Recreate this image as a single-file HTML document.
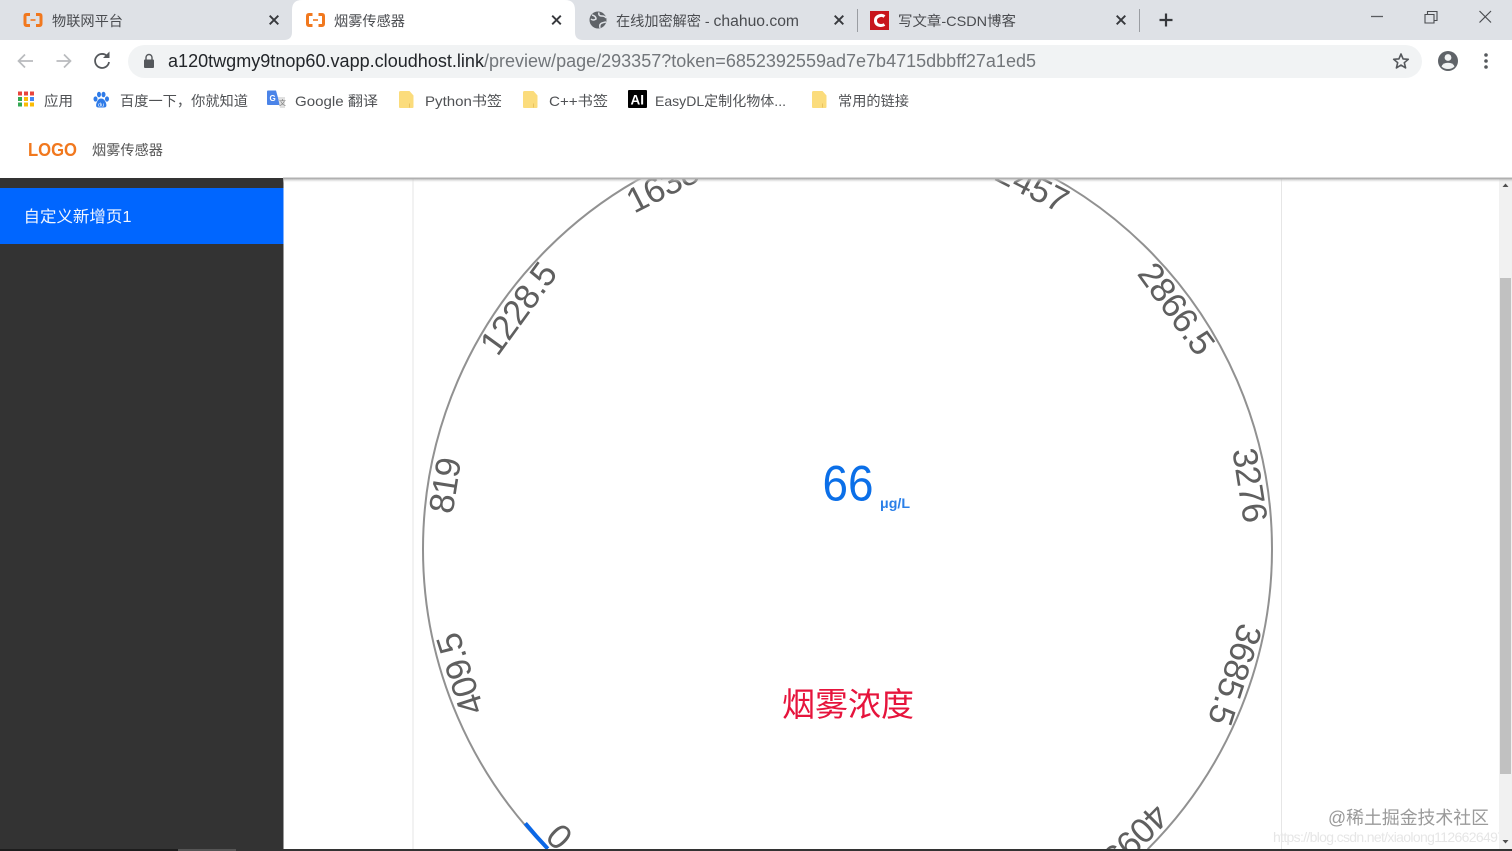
<!DOCTYPE html>
<html lang="zh">
<head>
<meta charset="utf-8">
<title>烟雾传感器</title>
<style>
html,body{margin:0;padding:0;width:1512px;height:851px;overflow:hidden;background:#fff}
svg{display:block}
text{font-family:"Liberation Sans","Noto Sans CJK SC",sans-serif}
.t{font-size:14px;fill:#4a4c50}
.b{font-size:14px;fill:#4f5154}
.g{font-size:35px;fill:#5f5f5f;text-anchor:middle}
</style>
</head>
<body>
<svg width="1512" height="851" viewBox="0 0 1512 851" xmlns="http://www.w3.org/2000/svg">
<defs>
<g id="ali" fill="none" stroke="#f1781e" stroke-width="3">
  <path d="M6.500 1.500H3Q1.500 1.500 1.500 3.200V10.800Q1.500 12.500 3 12.500H6.500"/>
  <path d="M12.500 1.500H16Q17.500 1.500 17.500 3.200V10.800Q17.500 12.500 16 12.500H12.500"/>
  <path d="M7 7H12" stroke-width="1.600"/>
</g>
<g id="x" stroke="#37393d" stroke-width="1.900" fill="none"><path d="M-4.300 -4.300L4.300 4.300M4.300 -4.300L-4.300 4.300"/></g>
<g id="folder">
  <path d="M0 1.500Q0 0 1.500 0H10.500L14.500 4.500V16Q14.500 17 13.500 17H1Q0 17 0 16Z" fill="#fbdc7c"/>
  <path d="M10.500 12.500V16.500" stroke="#e9c25e" stroke-width="1"/>
</g>
<linearGradient id="sh" x1="0" y1="0" x2="0" y2="1"><stop offset="0" stop-color="#9a9a9a"/><stop offset="1" stop-color="#fff" stop-opacity="0"/></linearGradient>
</defs>

<!-- page content -->
<rect width="1512" height="851" fill="#fff"/>
<rect x="412.500" y="178" width="1" height="673" fill="#e6e6e6"/>
<rect x="1281" y="178" width="1" height="673" fill="#e6e6e6"/>

<!-- gauge -->
<path d="M547.300 849.200A424.500 424.500 0 1 1 1147.700 849.200" fill="none" stroke="#919191" stroke-width="2"/>
<path d="M547.800 848.700A424.500 424.500 0 0 1 525.300 823.300" fill="none" stroke="#0b67e6" stroke-width="4"/>
<g class="labels">
<text class="g" transform="translate(559 837) rotate(-135) translate(0 12.500)">0</text>
<text class="g" transform="translate(459.500 674) rotate(-108) translate(0 12.500)" textLength="84">409.5</text>
<text class="g" transform="translate(444.500 485.200) rotate(-81) translate(0 12.500)" textLength="56">819</text>
<text class="g" transform="translate(518 308) rotate(-54) translate(0 12.500)" textLength="104">1228.5</text>
<text class="g" transform="translate(662.300 185.500) rotate(-27) translate(0 12.500)" textLength="76">1638</text>
<text class="g" transform="translate(1032.700 185.500) rotate(27) translate(0 12.500)" textLength="76">2457</text>
<text class="g" transform="translate(1177 308.500) rotate(54) translate(0 12.500)" textLength="104">2866.5</text>
<text class="g" transform="translate(1250.500 485.200) rotate(81) translate(0 12.500)" textLength="75">3276</text>
<text class="g" transform="translate(1235.500 675) rotate(108) translate(0 12.500)" textLength="104">3685.5</text>
<text class="g" transform="translate(1136 837.500) rotate(135) translate(0 12.500)" textLength="76">4095</text>
</g>
<text x="822.500" y="500.500" font-size="50" fill="#0b6fe8" textLength="51" lengthAdjust="spacingAndGlyphs">66</text>
<text x="880" y="508" font-size="14" font-weight="bold" fill="#2a7fe8" textLength="30" lengthAdjust="spacingAndGlyphs">μg/L</text>
<text x="782" y="716" font-size="33" fill="#e6143c">烟雾浓度</text>

<!-- watermark -->
<text x="1328" y="824" font-size="18" fill="#9a9a9a" textLength="161" lengthAdjust="spacingAndGlyphs">@稀土掘金技术社区</text>
<text x="1273" y="842" font-size="14" fill="#e6e6e6" textLength="232">https://blog.csdn.net/xiaolong1126626497</text>

<!-- scrollbar -->
<rect x="1499" y="178" width="13" height="673" fill="#f1f1f1"/>
<rect x="1500" y="278" width="11" height="496" fill="#c1c1c1"/>
<path d="M1502.500 187L1505.500 183.500L1508.500 187Z" fill="#505050"/>
<path d="M1502.500 840L1505.500 843.500L1508.500 840Z" fill="#505050"/>

<!-- sidebar -->
<rect x="0" y="178" width="283.500" height="673" fill="#333333"/>
<rect x="0" y="188" width="283.500" height="56" fill="#0066ff"/>
<text x="23.500" y="222" font-size="16" fill="#f2f6ff" textLength="108" lengthAdjust="spacingAndGlyphs">自定义新增页1</text>
<rect x="178" y="849" width="58" height="2" fill="#555"/>

<!-- bottom taskbar edge -->
<rect x="0" y="849" width="178" height="2" fill="#1d1d1d"/>
<rect x="236" y="849" width="1276" height="2" fill="#333"/>

<!-- header -->
<rect x="283" y="178" width="1229" height="5" fill="url(#sh)"/>
<rect x="0" y="80" width="1512" height="98" fill="#fff"/>
<rect x="283" y="177.500" width="1229" height="1.500" fill="#b0b0b0"/>
<text x="28" y="156" font-size="18.500" font-weight="bold" fill="#f1781e" textLength="49" lengthAdjust="spacingAndGlyphs">LOGO</text>
<text x="92" y="155" font-size="14" fill="#555" textLength="71" lengthAdjust="spacingAndGlyphs">烟雾传感器</text>

<!-- tab strip -->
<rect width="1512" height="40" fill="#dee1e6"/>
<path d="M284 40Q292 40 292 32V10Q292 0 302 0H565Q575 0 575 10V32Q575 40 583 40Z" fill="#fff"/>
<use href="#ali" x="23.500" y="13"/>
<text class="t" x="52" y="26" textLength="71" lengthAdjust="spacingAndGlyphs">物联网平台</text>
<use href="#x" x="274" y="20"/>
<use href="#ali" x="306" y="13"/>
<text class="t" x="334" y="26" textLength="71" lengthAdjust="spacingAndGlyphs">烟雾传感器</text>
<use href="#x" x="556.500" y="20"/>
<circle cx="598" cy="20" r="8.500" fill="#5f6368"/>
<path d="M592 15Q596 16 596 19Q593 21 591 19M599 12.500Q598 16 602 16Q605 16 606 18M600 28Q599 24 602 23Q605 22 606 22" fill="none" stroke="#dee1e6" stroke-width="1.500"/>
<text class="t" x="616" y="26" textLength="183" lengthAdjust="spacingAndGlyphs">在线加密解密 - <tspan font-size="15.500">chahuo.com</tspan></text>
<use href="#x" x="839" y="20"/>
<rect x="857" y="9" width="1" height="23" fill="#9a9da2"/>
<rect x="870" y="11" width="19" height="19" fill="#c8161d"/>
<path d="M884.500 16.500Q882.500 15 880.500 15.500Q875.500 16.500 875.500 20.500Q875.500 25 880.500 25.500Q882.500 25.700 884.500 24.500" fill="none" stroke="#fff" stroke-width="3"/>
<text class="t" x="898" y="26" textLength="118" lengthAdjust="spacingAndGlyphs">写文章-CSDN博客</text>
<use href="#x" x="1121" y="20"/>
<rect x="1139" y="9" width="1" height="23" fill="#9a9da2"/>
<path d="M1166 13.500V26.500M1159.500 20H1172.500" stroke="#37393d" stroke-width="2.200" fill="none"/>
<path d="M1371 16.500H1383" stroke="#5a5c60" stroke-width="1.300"/>
<path d="M1425 14.500H1434V23H1425ZM1427.500 14V11.500H1437V20.500H1434.500" fill="none" stroke="#4a4c50" stroke-width="1.100"/>
<path d="M1479.500 11L1491 22.500M1491 11L1479.500 22.500" stroke="#4a4c50" stroke-width="1.200" fill="none"/>

<!-- toolbar -->
<rect y="40" width="1512" height="40" fill="#fff"/>
<path d="M33 61H19M25 54.500L18.500 61L25 67.500" fill="none" stroke="#b9bbbe" stroke-width="1.700"/>
<path d="M56.500 61H70.500M64 54.500L70.500 61L64 67.500" fill="none" stroke="#b9bbbe" stroke-width="1.700"/>
<path d="M107.500 56.500A7 7 0 1 0 109 62" fill="none" stroke="#55585c" stroke-width="1.800"/>
<path d="M109.500 51.500V58H103Z" fill="#55585c"/>
<rect x="128" y="45" width="1294" height="33" rx="16.500" fill="#f1f3f4"/>
<rect x="144" y="59.500" width="10" height="8.500" rx="1" fill="#55585c"/>
<path d="M146 60V57.500A3 3 0 0 1 152 57.500V60" fill="none" stroke="#55585c" stroke-width="1.400"/>
<text x="168" y="67" font-size="18" fill="#23262a" textLength="316" lengthAdjust="spacingAndGlyphs">a120twgmy9tnop60.vapp.cloudhost.link</text>
<text x="484" y="67" font-size="18" fill="#72767a" textLength="552" lengthAdjust="spacingAndGlyphs">/preview/page/293357?token=6852392559ad7e7b4715dbbff27a1ed5</text>
<path d="M1401 54L1403.100 58.900L1408.300 59.300L1404.300 62.700L1405.600 67.900L1401 65.100L1396.400 67.900L1397.700 62.700L1393.700 59.300L1398.900 58.900Z" fill="none" stroke="#55585c" stroke-width="1.600" stroke-linejoin="round"/>
<circle cx="1448" cy="61" r="10" fill="#5f6368"/>
<circle cx="1448" cy="57.500" r="3.400" fill="#f1f3f4"/>
<path d="M1441.500 66.500Q1443 62.800 1448 62.800Q1453 62.800 1454.500 66.500Q1452 69 1448 69Q1444 69 1441.500 66.500Z" fill="#f1f3f4"/>
<g fill="#55585c"><circle cx="1486" cy="55" r="1.800"/><circle cx="1486" cy="61" r="1.800"/><circle cx="1486" cy="67" r="1.800"/></g>

<!-- bookmarks -->
<g>
<rect x="18" y="91.500" width="4" height="4" fill="#e8453c"/><rect x="24" y="91.500" width="4" height="4" fill="#e8453c"/><rect x="30" y="91.500" width="4" height="4" fill="#e8453c"/>
<rect x="18" y="97" width="4" height="4" fill="#34a853"/><rect x="24" y="97" width="4" height="4" fill="#fbbc05"/><rect x="30" y="97" width="4" height="4" fill="#4285f4"/>
<rect x="18" y="102.500" width="4" height="4" fill="#34a853"/><rect x="24" y="102.500" width="4" height="4" fill="#fbbc05"/><rect x="30" y="102.500" width="4" height="4" fill="#fbbc05"/>
</g>
<text class="b" x="44" y="106" textLength="29" lengthAdjust="spacingAndGlyphs">应用</text>
<g fill="#2f7be8">
<ellipse cx="95.500" cy="99" rx="2" ry="2.600"/><ellipse cx="99" cy="94.500" rx="2" ry="2.800"/><ellipse cx="103.500" cy="94.500" rx="2" ry="2.800"/><ellipse cx="107" cy="99" rx="2" ry="2.600"/>
<path d="M101 98.500Q98 98.500 96.500 103Q95 107.500 98.500 107.500H104Q107.500 107.500 106 103Q104.500 98.500 101 98.500Z"/>
</g>
<text x="98" y="106.500" font-size="5.500" fill="#fff">du</text>
<text class="b" x="120" y="106" textLength="128" lengthAdjust="spacingAndGlyphs">百度一下，你就知道</text>
<path d="M267 91.500Q267 90.500 268 90.500H276L280 105H268Q267 105 267 104Z" fill="#4b84e8"/>
<text x="269.500" y="101" font-size="8" font-weight="bold" fill="#fff">G</text>
<path d="M278 97H285V108H280Z" fill="#e0e0e0"/>
<text x="279" y="105" font-size="7" fill="#777">文</text>
<text class="b" x="295" y="106" textLength="83" lengthAdjust="spacingAndGlyphs">Google 翻译</text>
<use href="#folder" x="399" y="91"/>
<text class="b" x="425" y="106" textLength="77" lengthAdjust="spacingAndGlyphs">Python书签</text>
<use href="#folder" x="523" y="91"/>
<text class="b" x="549" y="106" textLength="59" lengthAdjust="spacingAndGlyphs">C++书签</text>
<rect x="628" y="90" width="19" height="18" rx="1" fill="#000"/>
<text x="630.500" y="104.500" font-size="13.500" font-weight="bold" fill="#fff">AI</text>
<text class="b" x="655" y="106" textLength="131" lengthAdjust="spacingAndGlyphs">EasyDL定制化物体...</text>
<use href="#folder" x="812" y="91"/>
<text class="b" x="838" y="106" textLength="71" lengthAdjust="spacingAndGlyphs">常用的链接</text>
</svg>
</body>
</html>
